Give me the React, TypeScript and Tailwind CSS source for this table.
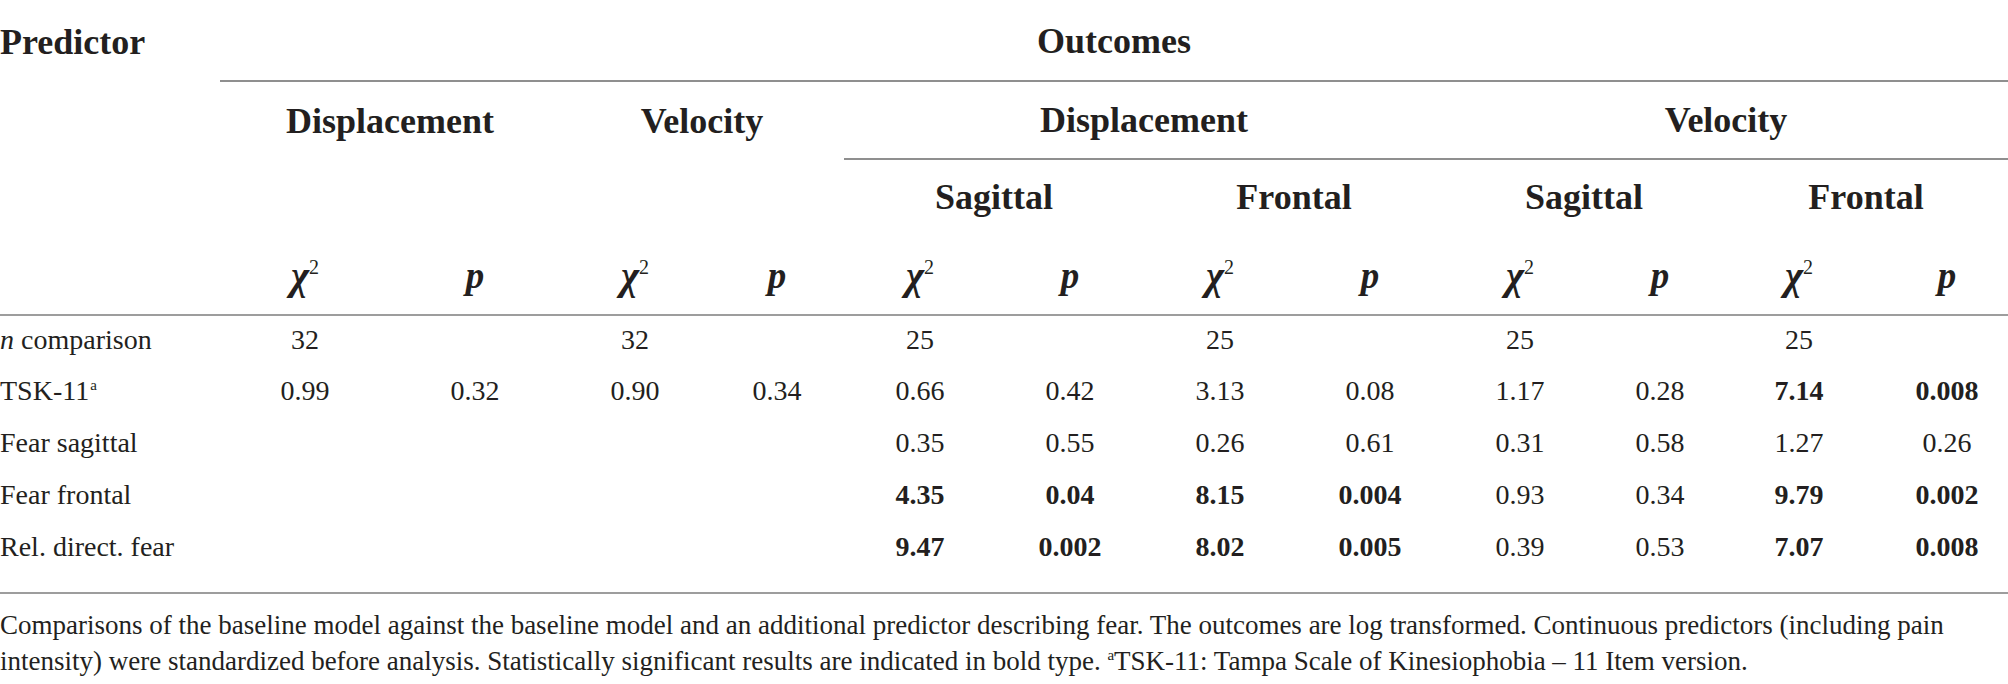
import React from "react";

const widths = [220, 170, 170, 150, 134, 152, 148, 152, 148, 152, 128, 150, 134];

type Row = { label: React.ReactNode; vals: string[] };

const rows: Row[] = [
  {
    label: (
      <>
        <i>n</i> comparison
      </>
    ),
    vals: ["32", "", "32", "", "25", "", "25", "", "25", "", "25", ""],
  },
  {
    label: (
      <>
        TSK-11<span className="text-[15px] relative -top-[10px] ml-[1px]">a</span>
      </>
    ),
    vals: ["0.99", "0.32", "0.90", "0.34", "0.66", "0.42", "3.13", "0.08", "1.17", "0.28", "*7.14", "*0.008"],
  },
  {
    label: "Fear sagittal",
    vals: ["", "", "", "", "0.35", "0.55", "0.26", "0.61", "0.31", "0.58", "1.27", "0.26"],
  },
  {
    label: "Fear frontal",
    vals: ["", "", "", "", "*4.35", "*0.04", "*8.15", "*0.004", "0.93", "0.34", "*9.79", "*0.002"],
  },
  {
    label: "Rel. direct. fear",
    vals: ["", "", "", "", "*9.47", "*0.002", "*8.02", "*0.005", "0.39", "0.53", "*7.07", "*0.008"],
  },
];

function Chi() {
  return (
    <span className="font-bold whitespace-nowrap">
      <i className="text-[39px]">χ</i>
      <span className="text-[20px] font-normal relative -top-[15px]">2</span>
    </span>
  );
}

function P() {
  return <i className="font-bold text-[37px]">p</i>;
}

export default function App() {
  return (
    <div className="w-[2008px] h-[684px] bg-white text-[#231f20] font-['Liberation_Serif',serif] overflow-hidden">
      <table className="table-fixed border-collapse w-[2008px]">
        <colgroup>
          {widths.map((w, i) => (
            <col key={i} style={{ width: w }} />
          ))}
        </colgroup>
        <thead className="text-[36px] font-bold leading-none">
          <tr>
            <th rowSpan={4} className="align-top text-left pt-[24px] border-b-2 border-[#9d9d9d] p-0">
              Predictor
            </th>
            <th colSpan={12} className="h-[81px] text-center border-b-2 border-[#8f8f8f] p-0 pt-[2px]">
              Outcomes
            </th>
          </tr>
          <tr>
            <th colSpan={2} className="h-[78px] text-center p-0">
              Displacement
            </th>
            <th colSpan={2} className="text-center p-0">
              Velocity
            </th>
            <th colSpan={4} className="text-center border-b-2 border-[#8f8f8f] p-0">
              Displacement
            </th>
            <th colSpan={4} className="text-center border-b-2 border-[#8f8f8f] p-0">
              Velocity
            </th>
          </tr>
          <tr>
            <th colSpan={4} className="h-[74px] p-0"></th>
            <th colSpan={2} className="text-center p-0">
              Sagittal
            </th>
            <th colSpan={2} className="text-center p-0">
              Frontal
            </th>
            <th colSpan={2} className="text-center p-0">
              Sagittal
            </th>
            <th colSpan={2} className="text-center p-0">
              Frontal
            </th>
          </tr>
          <tr>
            {Array.from({ length: 12 }).map((_, i) => (
              <th
                key={i}
                className={`h-[82px] text-center border-b-2 border-[#9d9d9d] p-0 pt-[4px] ${i === 11 ? "pl-[12px]" : ""}`}
              >
                {i % 2 === 0 ? <Chi /> : <P />}
              </th>
            ))}
          </tr>
        </thead>
        <tbody className="text-[28px] leading-none">
          {rows.map((r, ri) => (
            <tr key={ri}>
              <td
                className={`text-left p-0 ${
                  ri === rows.length - 1 ? "h-[70px] pb-[22px]" : "h-[52px] pb-[4px]"
                }`}
              >
                {r.label}
              </td>
              {r.vals.map((v, vi) => {
                const bold = v.startsWith("*");
                const txt = bold ? v.slice(1) : v;
                return (
                  <td
                    key={vi}
                    className={`text-center p-0 ${bold ? "font-bold" : ""} ${vi === 11 ? "pl-[12px]" : ""} ${
                      ri === rows.length - 1 ? "pb-[22px]" : "pb-[4px]"
                    }`}
                  >
                    {txt}
                  </td>
                );
              })}
            </tr>
          ))}
          <tr>
            <td colSpan={13} className="p-0 border-t-2 border-[#9d9d9d]"></td>
          </tr>
        </tbody>
      </table>
      <div className="text-[27px] leading-[36px] pt-[13px]">
        <div className="whitespace-nowrap">
          Comparisons of the baseline model against the baseline model and an additional predictor describing fear. The
          outcomes are log transformed. Continuous predictors (including pain
        </div>
        <div className="whitespace-nowrap">
          intensity) were standardized before analysis. Statistically significant results are indicated in bold type.{" "}
          <span className="text-[15px] relative -top-[10px]">a</span>TSK-11: Tampa Scale of Kinesiophobia – 11 Item version.
        </div>
      </div>
    </div>
  );
}
